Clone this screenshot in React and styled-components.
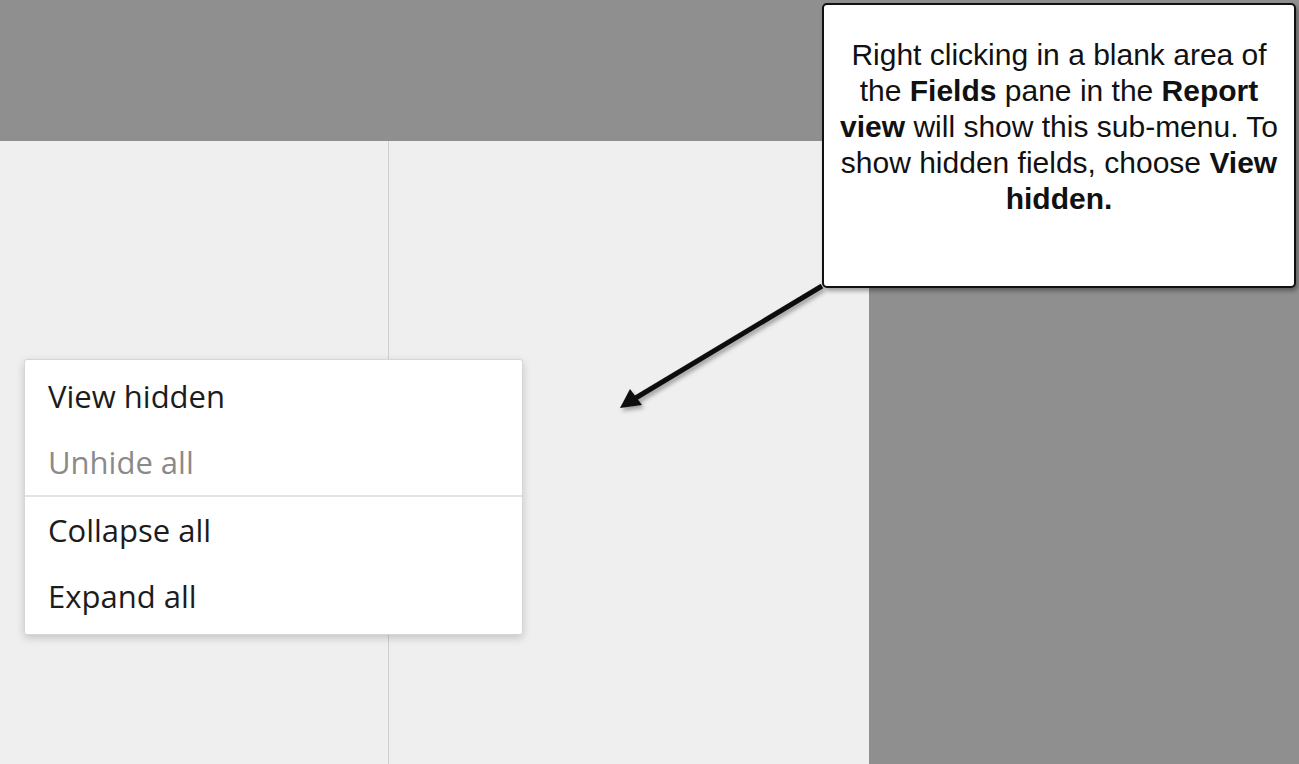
import React from "react";
import styled, { createGlobalStyle } from "styled-components";

const Global = createGlobalStyle`
  html, body {
    margin: 0;
    padding: 0;
    width: 1299px;
    height: 764px;
    overflow: hidden;
    background: #8f8f8f;
  }
`;

const Page = styled.div`
  position: relative;
  width: 1299px;
  height: 764px;
  display: flex;
  flex-direction: column;
  background: #8f8f8f;
`;

const TopBand = styled.div`
  height: 141px;
  flex-shrink: 0;
  background: #8f8f8f;
`;

const Body = styled.div`
  flex: 1;
  display: flex;
`;

const Pane = styled.div`
  position: relative;
  width: 869px;
  display: grid;
  grid-template-columns: 389px 1fr;
  background: #efefef;
`;

const Column = styled.div`
  border-right: ${(p) => (p.divided ? "1px solid #cfcfcf" : "none")};
`;

const Side = styled.div`
  flex: 1;
  background: #8f8f8f;
`;

const Menu = styled.ul`
  position: absolute;
  left: 24px;
  top: 218px;
  width: 499px;
  margin: 0;
  padding: 3px 0 5px;
  list-style: none;
  background: #ffffff;
  border: 1px solid #d6d6d6;
  border-radius: 3px;
  box-shadow: 0 3px 8px rgba(0, 0, 0, 0.18);
  box-sizing: border-box;
`;

const Item = styled.li`
  height: 66px;
  display: flex;
  align-items: center;
  padding-left: 23px;
  font-family: "Open Sans", "Noto Sans", sans-serif;
  font-size: 31px;
  color: ${(p) => (p.disabled ? "#8a8a8a" : "#1c1c1c")};
`;

const Divider = styled.li`
  height: 2px;
  margin: 0;
  background: #e3e3e3;
`;

const Callout = styled.div`
  position: absolute;
  left: 822px;
  top: 3px;
  width: 474px;
  height: 285px;
  box-sizing: border-box;
  padding: 32px 8px 0;
  background: #ffffff;
  border: 2px solid #111111;
  border-radius: 5px;
  box-shadow: 2px 3px 4px rgba(0, 0, 0, 0.35);
  font-family: "Liberation Sans", Arial, sans-serif;
  font-size: 30px;
  line-height: 36px;
  color: #111111;
  text-align: center;
`;

const Strong = styled.b`
  font-weight: 700;
  line-height: 36px;
`;

const Arrow = styled.svg`
  position: absolute;
  left: 600px;
  top: 270px;
  overflow: visible;
`;

const items = [
  { label: "View hidden" },
  { label: "Unhide all", disabled: true },
  { divider: true },
  { label: "Collapse all" },
  { label: "Expand all" },
];

export default function App() {
  return (
    <Page>
      <Global />
      <TopBand />
      <Body>
        <Pane>
          <Column divided />
          <Column />
          <Menu>
            {items.map((it, i) =>
              it.divider ? (
                <Divider key={i} />
              ) : (
                <Item key={i} disabled={it.disabled}>
                  {it.label}
                </Item>
              )
            )}
          </Menu>
        </Pane>
        <Side />
      </Body>
      <Callout>
        Right clicking in a blank area of the <Strong>Fields</Strong> pane in
        the <Strong>Report view</Strong> will show this sub-menu. To show
        hidden fields, choose <Strong>View hidden.</Strong>
      </Callout>
      <Arrow width="240" height="160" viewBox="0 0 240 160">
        <defs>
          <filter id="sh" x="-20%" y="-20%" width="140%" height="140%">
            <feDropShadow dx="2" dy="3" stdDeviation="2" floodOpacity="0.35" />
          </filter>
        </defs>
        <g filter="url(#sh)">
          <line x1="222" y1="16" x2="34" y2="129" stroke="#111" strokeWidth="5" />
          <polygon points="20,138 30,119 42,135" fill="#111" />
        </g>
      </Arrow>
    </Page>
  );
}
